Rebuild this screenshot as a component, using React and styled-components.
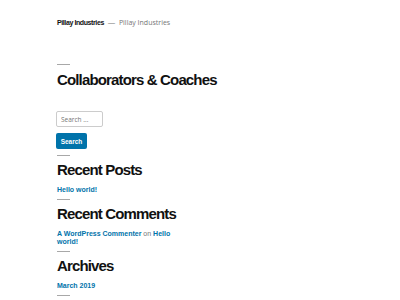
import React from 'react';
import styled, { createGlobalStyle } from 'styled-components';

const colors = {
  text: '#111111',
  grey: '#767676',
  rule: '#a8a8a8',
  link: '#0073aa',
  border: '#cccccc',
};

const GlobalStyle = createGlobalStyle`
  html, body {
    margin: 0;
    padding: 0;
    background: #ffffff;
  }
  body {
    font-family: "Liberation Sans", Arial, sans-serif;
    color: ${colors.text};
  }
`;

const Page = styled.div`
  width: 400px;
  height: 300px;
  overflow: hidden;
  padding: 0 57px;
  box-sizing: border-box;
`;

const Header = styled.header`
  display: flex;
  align-items: baseline;
  gap: 3px;
  padding-top: 18px;
  font-size: 7px;
  line-height: 9px;
`;

const SiteTitle = styled.span`
  font-weight: 600;
  letter-spacing: -0.4px;
  color: ${colors.text};
`;

const Dash = styled.span`
  color: ${colors.grey};
  margin: 0 1px;
`;

const Tagline = styled.span`
  color: ${colors.grey};
  font-family: "Open Sans", sans-serif;
  font-size: 7px;
`;

const Rule = styled.hr`
  width: 13px;
  height: 1px;
  border: 0;
  background: ${colors.rule};
  margin: 0;
`;

const Section = styled.section`
  display: flex;
  flex-direction: column;
  align-items: flex-start;
  margin-top: ${p => p.$top || 0}px;
`;

const PageTitle = styled.h1`
  font-size: 15px;
  line-height: 16px;
  font-weight: 700;
  letter-spacing: -0.85px;
  margin: 7px 0 0;
`;

const WidgetTitle = styled.h2`
  font-size: 15px;
  line-height: 16px;
  font-weight: 700;
  letter-spacing: -0.85px;
  margin: 6px 0 0;
`;

const SearchForm = styled.form`
  display: flex;
  flex-direction: column;
  align-items: flex-start;
  gap: 6px;
  margin-top: 23px;
`;

const SearchInput = styled.input`
  width: 47px;
  height: 16px;
  box-sizing: border-box;
  border: 1px solid ${colors.border};
  border-radius: 2px;
  padding: 0 4px;
  font-family: "Open Sans", sans-serif;
  font-size: 6.5px;
  margin-left: -1px;
  &::placeholder {
    color: ${colors.grey};
  }
`;

const SearchButton = styled.button`
  width: 31px;
  height: 16px;
  border: 0;
  border-radius: 2px;
  background: ${colors.link};
  color: #fff;
  font-family: "Liberation Sans", Arial, sans-serif;
  font-weight: 700;
  font-size: 6.5px;
  padding: 0;
  margin-left: -1px;
`;

const LinkText = styled.p`
  margin: 8px 0 5px;
  font-size: 7px;
  line-height: 8px;
  font-weight: 700;
  color: ${colors.link};
  width: 125px;
  span {
    font-weight: 400;
    color: ${colors.grey};
  }
`;

export default function App() {
  return (
    <>
      <GlobalStyle />
      <Page>
        <Header>
          <SiteTitle>Pillay Industries</SiteTitle>
          <Dash>—</Dash>
          <Tagline>Pillay Industries</Tagline>
        </Header>
        <Section $top={37}>
          <Rule />
          <PageTitle>Collaborators &amp; Coaches</PageTitle>
        </Section>
        <SearchForm onSubmit={e => e.preventDefault()}>
          <SearchInput placeholder="Search ..." />
          <SearchButton type="button">Search</SearchButton>
        </SearchForm>
        <Section $top={6}>
          <Rule />
          <WidgetTitle>Recent Posts</WidgetTitle>
          <LinkText>Hello world!</LinkText>
        </Section>
        <Section>
          <Rule />
          <WidgetTitle>Recent Comments</WidgetTitle>
          <LinkText>A WordPress Commenter <span>on</span> Hello world!</LinkText>
        </Section>
        <Section>
          <Rule />
          <WidgetTitle>Archives</WidgetTitle>
          <LinkText>March 2019</LinkText>
        </Section>
        <Section>
          <Rule />
        </Section>
      </Page>
    </>
  );
}
